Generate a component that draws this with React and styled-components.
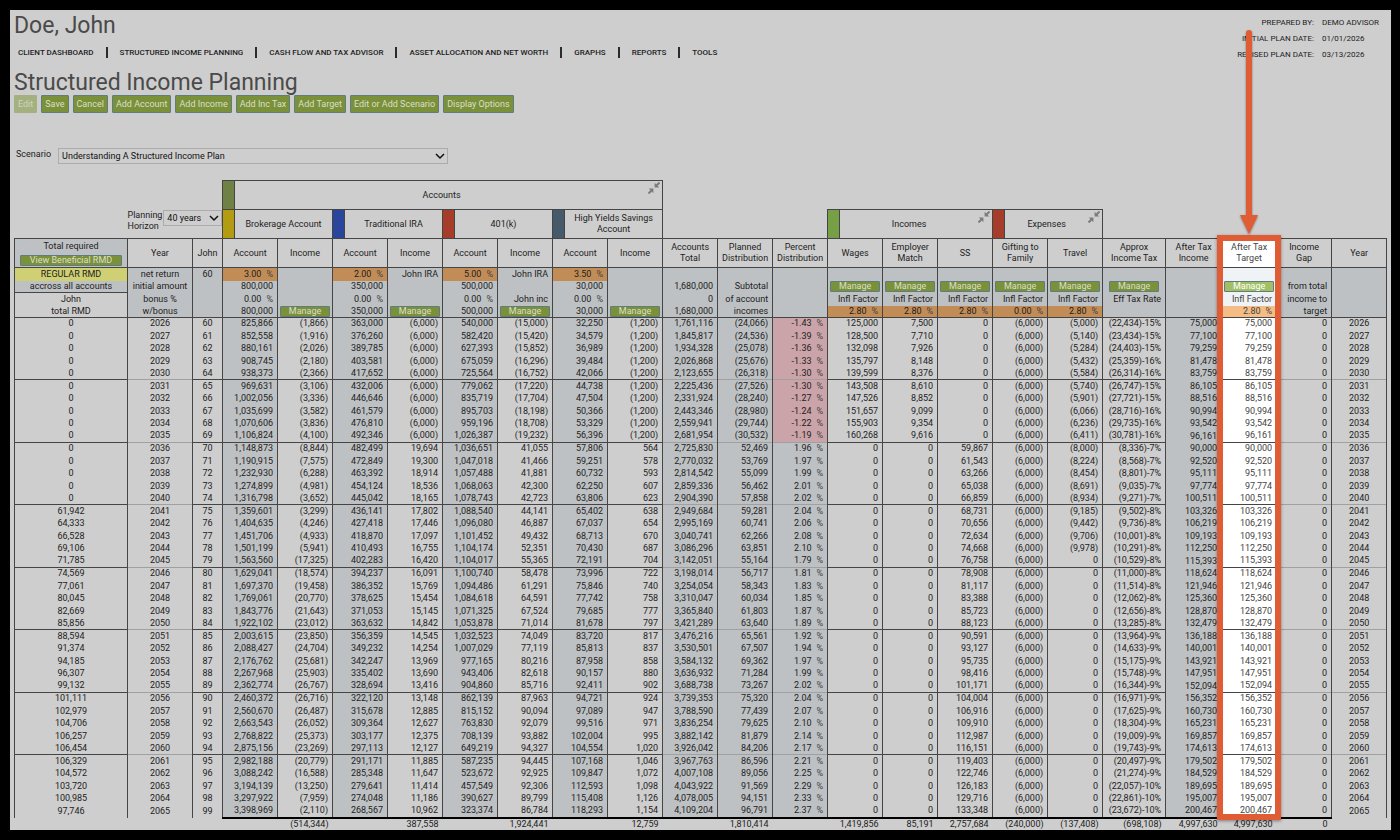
import { Fragment } from "react";
import styled, { createGlobalStyle, css } from "styled-components";

const GlobalStyle = createGlobalStyle`
  * {
    box-sizing: border-box;
  }
  body {
    margin: 0;
    background: #000;
    color: #1d1d1d;
    font-family: Roboto, "Liberation Sans", sans-serif;
    font-size: 9px;
  }
`;

const line = "#454545";
const faintLine = "#a0a0a0";
const plain = "#cecece";
const shade = "#bec1c3";
const orange = "#c28c57";

const Page = styled.main`
  padding: 10px 9px 10px 10px;
`;

const Panel = styled.div`
  padding: 0 4px;
  background: ${plain};
`;

const Top = styled.header`
  display: flex;
  justify-content: space-between;
  align-items: flex-start;
`;

const Heading = styled.h1`
  margin: 0;
  font-size: 23px;
  font-weight: 400;
  line-height: 32px;
  color: #4a4a4a;
`;

const PageTitle = styled(Heading).attrs({ as: "h2" })`
  padding-top: 9px;
  line-height: 24px;
`;

const Nav = styled.nav`
  display: flex;
  align-items: center;
  height: 20px;
  padding-left: 4px;
`;

const NavLink = styled.a`
  font-size: 8px;
  font-weight: 500;
  color: #1d1d1d;
  text-decoration: none;
`;

const NavDivider = styled.span`
  width: 2px;
  height: 11px;
  margin: 0 12px;
  background: #2b2b2b;
`;

const PlanInfo = styled.dl`
  display: grid;
  grid-template-columns: auto auto;
  column-gap: 8px;
  margin: 5px 8px 0 0;
  font-size: 8px;
  line-height: 16px;

  dt {
    text-align: right;
  }
  dd {
    margin: 0;
  }
`;

const Toolbar = styled.div`
  display: flex;
  gap: 4px;
`;

const Button = styled.button`
  height: 18px;
  padding: 0 3px;
  border: 1px solid #5f7d80;
  border-radius: 1px;
  background: #7a9139;
  color: #dadfcb;
  font-family: inherit;
  font-size: 9px;
  line-height: 14px;
  cursor: pointer;

  &:disabled {
    border-color: #a3b07f;
    background: #a3b07f;
    color: #cfd5bd;
  }
`;

const SmallButton = styled(Button)`
  display: block;
  width: ${({ $wide }) => ($wide ? "102px" : "50px")};
  max-width: 100%;
  height: 11px;
  margin: ${({ $wide }) => ($wide ? "3px auto 0" : "0 auto")};
  padding: 0;
  line-height: 9px;
  ${({ $bright }) => $bright && css`
    background: #a2bf65;
    color: #fff;
  `}
`;

const ScenarioBar = styled.div`
  display: flex;
  gap: 7px;
  margin-top: 35px;
  padding-left: 2px;
  line-height: 12px;
`;

const SelectWrap = styled.span`
  position: relative;
  display: block;
  width: ${({ $width }) => $width};

  svg {
    position: absolute;
    top: 4px;
    right: 3px;
    pointer-events: none;
  }
`;

const Select = styled.select`
  display: block;
  width: 100%;
  height: 16px;
  padding: 0 3px;
  border: 1px solid #acacac;
  border-radius: 0;
  background: transparent;
  color: #111;
  font-family: inherit;
  font-size: 9px;
  appearance: none;
`;

const TableWrap = styled.div`
  position: relative;
  margin-top: 16px;
`;

const Table = styled.table`
  width: 100%;
  table-layout: fixed;
  border-collapse: collapse;
  line-height: 11px;
  white-space: nowrap;

  th,
  td {
    padding: 0;
    font-weight: 400;
  }
`;

const HeadRow = styled.tr`
  height: 29px;
`;

const Row = styled.tr`
  height: 12px;
`;

const SetupBody = styled.tbody`
  ${Row}:nth-child(odd) {
    height: 13px;
  }
`;

const YearBody = styled.tbody`
  ${Row}:nth-child(even) {
    height: 13px;
  }
`;

const GroupHead = styled.th`
  height: 29px;
  border: 1px solid ${line};
`;

const GroupInner = styled.div`
  display: flex;
  align-items: center;
  height: 28px;
  white-space: normal;

  svg {
    align-self: flex-start;
    margin: 1px 2px 0 0;
  }
`;

const GroupName = styled.span`
  flex: 1;
  text-align: center;
`;

const Swatch = styled.span`
  align-self: stretch;
  width: 12px;
  border-right: 1px solid ${line};
  background: ${({ $color }) => $color};
`;

const HorizonCell = styled.td`
  vertical-align: top;
`;

const Horizon = styled.div`
  display: flex;
  white-space: normal;

  label {
    width: 36px;
  }
`;

const ColumnHead = styled.th`
  border: 1px solid ${line};
  background: ${({ $bg }) => $bg || "transparent"};
  color: ${({ $bright }) => ($bright ? "#444" : "inherit")};
  white-space: pre-line;
`;

const Cell = styled.td`
  height: inherit;
  border-left: 1px solid ${line};
  border-right: 1px solid ${line};
  text-align: ${({ $center }) => ($center ? "center" : "right")};
  background: ${({ $bg }) => $bg || "transparent"};
  color: ${({ $bright }) => ($bright ? "#444" : "inherit")};
  ${({ $top }) => $top && css`border-top: 1px solid ${$top};`}

  && {
    padding: ${({ $center }) => ($center ? "0" : "0 4px 0 0")};
  }
`;

const Percent = styled.span`
  margin-left: 5px;
  color: #444;
`;

const TotalCell = styled.td`
  border-top: ${({ $rule }) => ($rule ? "2px solid #000" : "none")};
  text-align: right;

  && {
    padding-right: 4px;
  }
`;

/* sits over the After Tax Target column */
const Callout = styled.div`
  position: absolute;
  top: 55px;
  bottom: 10px;
  left: calc(100% * 1208 / 1372 - 6px);
  width: 64px;
  border: 6px solid #e05c34;
  box-shadow: 0 1px 3px rgba(0, 0, 0, 0.4);
  pointer-events: none;

  svg {
    position: absolute;
    top: -213px;
    left: 17px;
    overflow: visible;
    filter: drop-shadow(0 1px 1px rgba(0, 0, 0, 0.4));
  }
`;

const Chevron = () => (
  <svg width="10" height="8" viewBox="0 0 10 8" fill="none" stroke="#111" strokeWidth="1.5">
    <path d="M1 2l4 4 4-4" />
  </svg>
);

const CollapseIcon = () => (
  <svg width="12" height="12" viewBox="0 0 12 12" fill="#7c7c7c" stroke="#7c7c7c">
    <path d="M11.5.5L8 4M.5 11.5L4 8" strokeWidth="2" />
    <path d="M6.6.8l4.6 4.6H6.6zM.8 6.6h4.6v4.6z" stroke="none" />
  </svg>
);

const navItems = [
  "CLIENT DASHBOARD",
  "STRUCTURED INCOME PLANNING",
  "CASH FLOW AND TAX ADVISOR",
  "ASSET ALLOCATION AND NET WORTH",
  "GRAPHS",
  "REPORTS",
  "TOOLS",
];

const actions = [
  "Save",
  "Cancel",
  "Add Account",
  "Add Income",
  "Add Inc Tax",
  "Add Target",
  "Edit or Add Scenario",
  "Display Options",
];

const accounts = [
  { name: "Brokerage Account", color: "#b39b12" },
  { name: "Traditional IRA", color: "#2a459c" },
  { name: "401(k)", color: "#a53d2a" },
  { name: "High Yields Savings Account", color: "#465a69" },
];

// setup: what the four rows under the column title hold
// "!" = Manage button, "~" in front = editable rate
const columns = [
  { title: "rmd", width: 113, center: true },
  { title: "Year", width: 65, center: true, rule: "faint", setup: ["net return", "initial amount", "bonus %", "w/bonus"] },
  { title: "John", width: 30, center: true, setup: ["60", "", "", ""] },
  { title: "Account", width: 55, shaded: true, setup: ["~3.00 %", "800,000", "0.00 %", "800,000"] },
  { title: "Income", width: 55, setup: ["", "", "", "!"] },
  { title: "Account", width: 55, shaded: true, setup: ["~2.00 %", "350,000", "0.00 %", "350,000"] },
  { title: "Income", width: 55, setup: ["John IRA", "", "", "!"] },
  { title: "Account", width: 55, shaded: true, setup: ["~5.00 %", "500,000", "0.00 %", "500,000"] },
  { title: "Income", width: 55, setup: ["John IRA", "", "John inc", "!"] },
  { title: "Account", width: 55, shaded: true, setup: ["~3.50 %", "30,000", "0.00 %", "30,000"] },
  { title: "Income", width: 55, setup: ["", "", "", "!"] },
  { title: "Accounts\nTotal", width: 55, shaded: true, rule: "faint", setup: ["", "1,680,000", "0", "1,680,000"] },
  { title: "Planned\nDistribution", width: 55, shaded: true, rule: "faint", setup: ["", "Subtotal", "of account", "incomes"] },
  { title: "Percent\nDistribution", width: 55, shaded: true, rule: "faint", setup: ["", "", "", ""] },
  { title: "Wages", width: 55, setup: ["", "!", "Infl Factor", "~2.80 %"] },
  { title: "Employer\nMatch", width: 55, setup: ["", "!", "Infl Factor", "~2.80 %"] },
  { title: "SS", width: 55, setup: ["", "!", "Infl Factor", "~2.80 %"] },
  { title: "Gifting to\nFamily", width: 55, setup: ["", "!", "Infl Factor", "~0.00 %"] },
  { title: "Travel", width: 55, setup: ["", "!", "Infl Factor", "~2.80 %"] },
  { title: "Approx\nIncome Tax", width: 63, setup: ["", "!", "Eff Tax Rate", ""] },
  { title: "After Tax\nIncome", width: 56, shaded: true, rule: "none", setup: ["", "", "", ""] },
  { title: "After Tax\nTarget", width: 55, bright: true, setup: ["", "!", "Infl Factor", "~2.80 %"] },
  { title: "Income\nGap", width: 55, rule: "faint", setup: ["", "from total", "income to", "target"] },
  { title: "Year", width: 55, center: true, rule: "faint", setup: ["", "", "", ""] },
];

// rmd, four account/income pairs, total, planned, percent, wages, match, ss, travel, tax, after tax
const plan = `
0 825,866 (1,866) 363,000 (6,000) 540,000 (15,000) 32,250 (1,200) 1,761,116 (24,066) -1.43 125,000 7,500 0 (5,000) (22,434)-15% 75,000
0 852,558 (1,916) 376,260 (6,000) 582,420 (15,420) 34,579 (1,200) 1,845,817 (24,536) -1.39 128,500 7,710 0 (5,140) (23,434)-15% 77,100
0 880,161 (2,026) 389,785 (6,000) 627,393 (15,852) 36,989 (1,200) 1,934,328 (25,078) -1.36 132,098 7,926 0 (5,284) (24,403)-15% 79,259
0 908,745 (2,180) 403,581 (6,000) 675,059 (16,296) 39,484 (1,200) 2,026,868 (25,676) -1.33 135,797 8,148 0 (5,432) (25,359)-16% 81,478
0 938,373 (2,366) 417,652 (6,000) 725,564 (16,752) 42,066 (1,200) 2,123,655 (26,318) -1.30 139,599 8,376 0 (5,584) (26,314)-16% 83,759
0 969,631 (3,106) 432,006 (6,000) 779,062 (17,220) 44,738 (1,200) 2,225,436 (27,526) -1.30 143,508 8,610 0 (5,740) (26,747)-15% 86,105
0 1,002,056 (3,336) 446,646 (6,000) 835,719 (17,704) 47,504 (1,200) 2,331,924 (28,240) -1.27 147,526 8,852 0 (5,901) (27,721)-15% 88,516
0 1,035,699 (3,582) 461,579 (6,000) 895,703 (18,198) 50,366 (1,200) 2,443,346 (28,980) -1.24 151,657 9,099 0 (6,066) (28,716)-16% 90,994
0 1,070,606 (3,836) 476,810 (6,000) 959,196 (18,708) 53,329 (1,200) 2,559,941 (29,744) -1.22 155,903 9,354 0 (6,236) (29,735)-16% 93,542
0 1,106,824 (4,100) 492,346 (6,000) 1,026,387 (19,232) 56,396 (1,200) 2,681,954 (30,532) -1.19 160,268 9,616 0 (6,411) (30,781)-16% 96,161
0 1,148,873 (8,844) 482,499 19,694 1,036,651 41,055 57,806 564 2,725,830 52,469 1.96 0 0 59,867 (8,000) (8,336)-7% 90,000
0 1,190,915 (7,575) 472,849 19,300 1,047,018 41,466 59,251 578 2,770,032 53,769 1.97 0 0 61,543 (8,224) (8,568)-7% 92,520
0 1,232,930 (6,288) 463,392 18,914 1,057,488 41,881 60,732 593 2,814,542 55,099 1.99 0 0 63,266 (8,454) (8,801)-7% 95,111
0 1,274,899 (4,981) 454,124 18,536 1,068,063 42,300 62,250 607 2,859,336 56,462 2.01 0 0 65,038 (8,691) (9,035)-7% 97,774
0 1,316,798 (3,652) 445,042 18,165 1,078,743 42,723 63,806 623 2,904,390 57,858 2.02 0 0 66,859 (8,934) (9,271)-7% 100,511
61,942 1,359,601 (3,299) 436,141 17,802 1,088,540 44,141 65,402 638 2,949,684 59,281 2.04 0 0 68,731 (9,185) (9,502)-8% 103,326
64,333 1,404,635 (4,246) 427,418 17,446 1,096,080 46,887 67,037 654 2,995,169 60,741 2.06 0 0 70,656 (9,442) (9,736)-8% 106,219
66,528 1,451,706 (4,933) 418,870 17,097 1,101,452 49,432 68,713 670 3,040,741 62,266 2.08 0 0 72,634 (9,706) (10,001)-8% 109,193
69,106 1,501,199 (5,941) 410,493 16,755 1,104,174 52,351 70,430 687 3,086,296 63,851 2.10 0 0 74,668 (9,978) (10,291)-8% 112,250
71,785 1,563,560 (17,325) 402,283 16,420 1,104,017 55,365 72,191 704 3,142,051 55,164 1.79 0 0 76,758 0 (10,529)-8% 115,393
74,569 1,629,041 (18,574) 394,237 16,091 1,100,740 58,478 73,996 722 3,198,014 56,717 1.81 0 0 78,908 0 (11,000)-8% 118,624
77,061 1,697,370 (19,458) 386,352 15,769 1,094,486 61,291 75,846 740 3,254,054 58,343 1.83 0 0 81,117 0 (11,514)-8% 121,946
80,045 1,769,061 (20,770) 378,625 15,454 1,084,618 64,591 77,742 758 3,310,047 60,034 1.85 0 0 83,388 0 (12,062)-8% 125,360
82,669 1,843,776 (21,643) 371,053 15,145 1,071,325 67,524 79,685 777 3,365,840 61,803 1.87 0 0 85,723 0 (12,656)-8% 128,870
85,856 1,922,102 (23,012) 363,632 14,842 1,053,878 71,014 81,678 797 3,421,289 63,640 1.89 0 0 88,123 0 (13,285)-8% 132,479
88,594 2,003,615 (23,850) 356,359 14,545 1,032,523 74,049 83,720 817 3,476,216 65,561 1.92 0 0 90,591 0 (13,964)-9% 136,188
91,374 2,088,427 (24,704) 349,232 14,254 1,007,029 77,119 85,813 837 3,530,501 67,507 1.94 0 0 93,127 0 (14,633)-9% 140,001
94,185 2,176,762 (25,681) 342,247 13,969 977,165 80,216 87,958 858 3,584,132 69,362 1.97 0 0 95,735 0 (15,175)-9% 143,921
96,307 2,267,968 (25,903) 335,402 13,690 943,406 82,618 90,157 880 3,636,932 71,284 1.99 0 0 98,416 0 (15,748)-9% 147,951
99,132 2,362,774 (26,767) 328,694 13,416 904,860 85,716 92,411 902 3,688,738 73,267 2.02 0 0 101,171 0 (16,344)-9% 152,094
101,111 2,460,372 (26,716) 322,120 13,148 862,139 87,963 94,721 924 3,739,353 75,320 2.04 0 0 104,004 0 (16,971)-9% 156,352
102,979 2,560,670 (26,487) 315,678 12,885 815,152 90,094 97,089 947 3,788,590 77,439 2.07 0 0 106,916 0 (17,625)-9% 160,730
104,706 2,663,543 (26,052) 309,364 12,627 763,830 92,079 99,516 971 3,836,254 79,625 2.10 0 0 109,910 0 (18,304)-9% 165,231
106,257 2,768,822 (25,373) 303,177 12,375 708,139 93,882 102,004 995 3,882,142 81,879 2.14 0 0 112,987 0 (19,009)-9% 169,857
106,454 2,875,156 (23,269) 297,113 12,127 649,219 94,327 104,554 1,020 3,926,042 84,206 2.17 0 0 116,151 0 (19,743)-9% 174,613
106,329 2,982,188 (20,779) 291,171 11,885 587,235 94,445 107,168 1,046 3,967,763 86,596 2.21 0 0 119,403 0 (20,497)-9% 179,502
104,572 3,088,242 (16,588) 285,348 11,647 523,672 92,925 109,847 1,072 4,007,108 89,056 2.25 0 0 122,746 0 (21,274)-9% 184,529
103,720 3,194,139 (13,250) 279,641 11,414 457,549 92,306 112,593 1,098 4,043,922 91,569 2.29 0 0 126,183 0 (22,057)-10% 189,695
100,985 3,297,922 (7,959) 274,048 11,186 390,627 89,799 115,408 1,126 4,078,005 94,151 2.33 0 0 129,716 0 (22,861)-10% 195,007
97,746 3,398,969 (2,110) 268,567 10,962 323,374 86,784 118,293 1,154 4,109,204 96,791 2.37 0 0 133,348 0 (23,672)-10% 200,467
`;

const years = plan
  .trim()
  .split("\n")
  .map((row, i) => {
    const v = row.split(" ");
    const afterTax = v[17];
    return [
      v[0],
      2026 + i,
      60 + i,
      ...v.slice(1, 11),
      `${v[11]} %`,
      ...v.slice(12, 15),
      "(6,000)",
      v[15],
      v[16],
      afterTax,
      afterTax,
      "0",
      2026 + i,
    ];
  });

const totals = [
  "", "", "", "", "(514,344)", "", "387,558", "", "1,924,441", "", "12,759", "",
  "1,810,414", "", "1,419,856", "85,191", "2,757,684", "(240,000)", "(137,408)",
  "(698,108)", "4,997,630", "4,997,630", "0", "",
];

const rmdSetup = [
  { text: "REGULAR RMD", bg: "#cfd074" },
  { text: "accross all accounts", bg: shade },
  { text: "John", bg: plain, top: line },
  { text: "total RMD", bg: plain },
];

const ruleColor = (column) => {
  if (column.rule === "none") return null;
  return column.rule === "faint" ? faintLine : line;
};

const Value = ({ text }) => {
  const value = String(text);
  if (!value.endsWith(" %") || value === "bonus %") return value;
  return (
    <>
      {value.slice(0, -2)}
      <Percent>%</Percent>
    </>
  );
};

const SetupCell = ({ column, item, first }) => {
  const editable = item.startsWith("~");
  let bg = column.bright ? "#f0f3f6" : shade;
  if (editable) bg = column.bright ? "#f4bd86" : orange;

  return (
    <Cell
      $bg={bg}
      $bright={column.bright}
      $center={column.center || item === "!"}
      $top={first ? line : null}
    >
      {item === "!" ? (
        <SmallButton type="button" $bright={column.bright}>Manage</SmallButton>
      ) : (
        <Value text={item.replace("~", "")} />
      )}
    </Cell>
  );
};

const yearBackground = (column, value) => {
  if (column.bright) return "#fff";
  if (column.title.startsWith("Percent") && value.startsWith("-")) return "#cba4a9";
  return column.shaded ? shade : plain;
};

const Group = ({ name, color, span, collapsible }) => (
  <GroupHead colSpan={span} scope="colgroup">
    <GroupInner>
      <Swatch $color={color} />
      <GroupName>{name}</GroupName>
      {collapsible && <CollapseIcon />}
    </GroupInner>
  </GroupHead>
);

const PlanTable = () => (
  <TableWrap>
    <Table>
      <colgroup>
        {columns.map((column, i) => (
          <col key={i} width={column.width} />
        ))}
      </colgroup>
      <thead>
        <HeadRow>
          <td colSpan={3} />
          <Group name="Accounts" color="#6f8145" span={8} collapsible />
          <td colSpan={13} />
        </HeadRow>
        <HeadRow>
          <td />
          <HorizonCell colSpan={2}>
            <Horizon>
              <label htmlFor="horizon">Planning Horizon</label>
              <SelectWrap $width="59px">
                <Select id="horizon" defaultValue="40">
                  <option value="40">40 years</option>
                </Select>
                <Chevron />
              </SelectWrap>
            </Horizon>
          </HorizonCell>
          {accounts.map((account) => (
            <Group key={account.name} name={account.name} color={account.color} span={2} />
          ))}
          <td colSpan={3} />
          <Group name="Incomes" color="#779f45" span={3} collapsible />
          <Group name="Expenses" color="#a53d2a" span={2} collapsible />
          <td colSpan={5} />
        </HeadRow>
        <HeadRow>
          <ColumnHead $bg={shade}>
            Total required
            <SmallButton type="button" $wide>View Beneficial RMD</SmallButton>
          </ColumnHead>
          {columns.slice(1).map((column, i) => (
            <ColumnHead
              key={i}
              scope="col"
              $bg={column.bright ? "#fff" : plain}
              $bright={column.bright}
            >
              {column.title}
            </ColumnHead>
          ))}
        </HeadRow>
      </thead>
      <SetupBody>
        {rmdSetup.map((rmd, i) => (
          <Row key={rmd.text}>
            <Cell $center $bg={rmd.bg} $top={rmd.top}>{rmd.text}</Cell>
            {columns.slice(1).map((column, c) => (
              <SetupCell key={c} column={column} item={column.setup[i]} first={i === 0} />
            ))}
          </Row>
        ))}
      </SetupBody>
      <YearBody>
        {years.map((values, i) => (
          <Row key={values[1]}>
            {columns.map((column, c) => {
              let top = null;
              if (i === 0) top = line;
              else if (i % 5 === 0) top = ruleColor(column);
              return (
                <Cell
                  key={c}
                  $center={column.center}
                  $bright={column.bright}
                  $bg={yearBackground(column, String(values[c]))}
                  $top={top}
                >
                  <Value text={values[c]} />
                </Cell>
              );
            })}
          </Row>
        ))}
      </YearBody>
      <tfoot>
        <Row>
          {totals.map((total, i) => (
            <TotalCell key={i} $rule={i > 2 && i < 23}>{total}</TotalCell>
          ))}
        </Row>
      </tfoot>
    </Table>
    <Callout>
      <svg width="18" height="206" viewBox="0 0 18 206" fill="#e05c34">
        <rect x="6" y="2" width="6" height="190" rx="3" />
        <path d="M0 187h18L9 206z" />
      </svg>
    </Callout>
  </TableWrap>
);

const App = () => {
  return (
    <Page>
      <GlobalStyle />
      <Panel>
        <Top>
          <div>
            <Heading>Doe, John</Heading>
            <Nav>
              {navItems.map((item, i) => (
                <Fragment key={item}>
                  {i > 0 && <NavDivider />}
                  <NavLink href="#">{item}</NavLink>
                </Fragment>
              ))}
            </Nav>
            <PageTitle>Structured Income Planning</PageTitle>
          </div>
          <PlanInfo>
            <dt>PREPARED BY:</dt>
            <dd>DEMO ADVISOR</dd>
            <dt>INITIAL PLAN DATE:</dt>
            <dd>01/01/2026</dd>
            <dt>REVISED PLAN DATE:</dt>
            <dd>03/13/2026</dd>
          </PlanInfo>
        </Top>
        <Toolbar>
          <Button type="button" disabled>Edit</Button>
          {actions.map((action) => (
            <Button key={action} type="button">{action}</Button>
          ))}
        </Toolbar>
        <ScenarioBar>
          <label htmlFor="scenario">Scenario</label>
          <SelectWrap $width="390px">
            <Select id="scenario" defaultValue="sip">
              <option value="sip">Understanding A Structured Income Plan</option>
            </Select>
            <Chevron />
          </SelectWrap>
        </ScenarioBar>
        <PlanTable />
      </Panel>
    </Page>
  );
};

export default App;
